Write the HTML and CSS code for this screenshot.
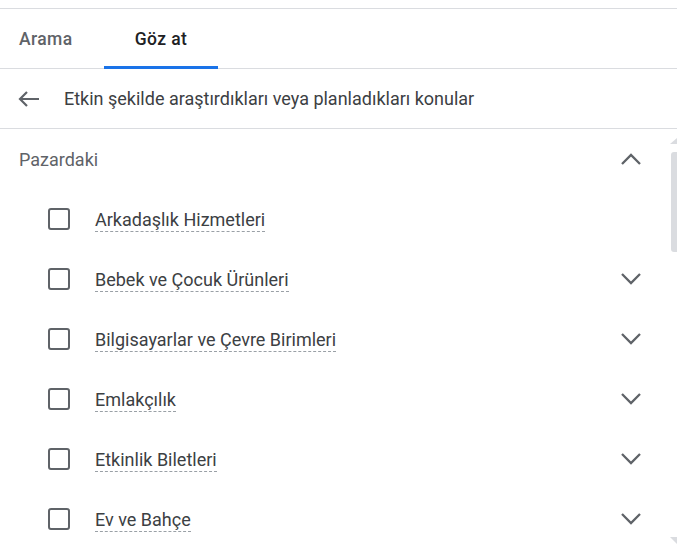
FILE: index.html
```html
<!DOCTYPE html>
<html lang="tr">
<head>
<meta charset="utf-8">
<link rel="stylesheet" href="styles.css">
</head>
<body>
<div class="top-rule"></div>
<div class="tabs">
  <div class="tab first">Arama</div>
  <div class="tab active">Göz at</div>
</div>
<div class="back-row">
  <svg class="back" width="24" height="18" viewBox="0 0 24 18"><path d="M22 9H3M10 2L3 9l7 7" fill="none" stroke="#5f6368" stroke-width="2.2"/></svg>
  <span>Etkin şekilde araştırdıkları veya planladıkları konular</span>
</div>
<div class="section">
  <div class="section-head">
    <span>Pazardaki</span>
    <svg class="chev" width="22" height="12" viewBox="0 0 22 12"><path d="M2 11l9-9 9 9" fill="none" stroke="#5f6368" stroke-width="2.3"/></svg>
  </div>
  <div class="item"><span class="box"></span><span class="label">Arkadaşlık Hizmetleri</span></div>
  <div class="item"><span class="box"></span><span class="label">Bebek ve Çocuk Ürünleri</span><svg class="chev" width="22" height="12" viewBox="0 0 22 12"><path d="M2 1l9 9 9-9" fill="none" stroke="#5f6368" stroke-width="2.3"/></svg></div>
  <div class="item"><span class="box"></span><span class="label">Bilgisayarlar ve Çevre Birimleri</span><svg class="chev" width="22" height="12" viewBox="0 0 22 12"><path d="M2 1l9 9 9-9" fill="none" stroke="#5f6368" stroke-width="2.3"/></svg></div>
  <div class="item"><span class="box"></span><span class="label">Emlakçılık</span><svg class="chev" width="22" height="12" viewBox="0 0 22 12"><path d="M2 1l9 9 9-9" fill="none" stroke="#5f6368" stroke-width="2.3"/></svg></div>
  <div class="item"><span class="box"></span><span class="label">Etkinlik Biletleri</span><svg class="chev" width="22" height="12" viewBox="0 0 22 12"><path d="M2 1l9 9 9-9" fill="none" stroke="#5f6368" stroke-width="2.3"/></svg></div>
  <div class="item"><span class="box"></span><span class="label">Ev ve Bahçe</span><svg class="chev" width="22" height="12" viewBox="0 0 22 12"><path d="M2 1l9 9 9-9" fill="none" stroke="#5f6368" stroke-width="2.3"/></svg></div>
</div>
<div class="scroll-up"></div>
<div class="scroll-thumb"></div>
<div class="scroll-down"></div>
</body>
</html>
```
FILE: styles.css
```css
html, body {
  margin: 0;
  padding: 0;
  background: #fff;
  overflow: hidden;
}
body {
  font-family: Roboto, "Liberation Sans", sans-serif;
  color: #3c4043;
  font-size: 18px;
  position: relative;
  height: 544px;
}
.top-rule {
  margin-top: 8px;
  height: 1px;
  background: #dadce0;
}
.tabs {
  display: flex;
  height: 59px;
  border-bottom: 1px solid #dadce0;
}
.tab {
  position: relative;
  display: flex;
  align-items: center;
  justify-content: center;
  font-size: 17.5px;
  font-weight: 500;
  color: #5f6368;
  letter-spacing: 0.4px;
}
.tab.first {
  width: 85px;
  padding-left: 19px;
  justify-content: flex-start;
}
.tab.active {
  width: 114px;
  color: #202124;
}
.tab.active::after {
  content: "";
  position: absolute;
  left: 0;
  right: 0;
  bottom: -1px;
  height: 3px;
  background: #1a73e8;
}
.back-row {
  display: flex;
  align-items: center;
  height: 59px;
  border-bottom: 1px solid #dadce0;
  padding-left: 17px;
}
.back {
  margin-right: 23px;
}
.section-head {
  display: flex;
  align-items: center;
  justify-content: space-between;
  height: 60px;
  padding: 0 35px 0 19px;
  color: #5f6368;
}
.item {
  display: flex;
  align-items: center;
  height: 60px;
  padding: 0 35px 0 48px;
}
.box {
  width: 18px;
  height: 18px;
  border: 2px solid #5f6368;
  border-radius: 3px;
  margin-right: 25px;
  flex: none;
}
.label {
  border-bottom: 1px dashed #9aa0a6;
  line-height: 21px;
  padding-bottom: 1px;
  margin-top: 3px;
}
.item .chev {
  margin-left: auto;
}
.scroll-up {
  position: absolute;
  right: 0;
  top: 138px;
  width: 0;
  height: 0;
  border-left: 7px solid transparent;
  border-bottom: 6px solid #dadce0;
}
.scroll-thumb {
  position: absolute;
  right: 0;
  top: 152px;
  width: 6px;
  height: 100px;
  background: #dadce0;
  border-radius: 3px 0 0 3px;
}
.scroll-down {
  position: absolute;
  right: 0;
  bottom: 0;
  width: 0;
  height: 0;
  border-left: 7px solid transparent;
  border-top: 7px solid #dadce0;
}
```
